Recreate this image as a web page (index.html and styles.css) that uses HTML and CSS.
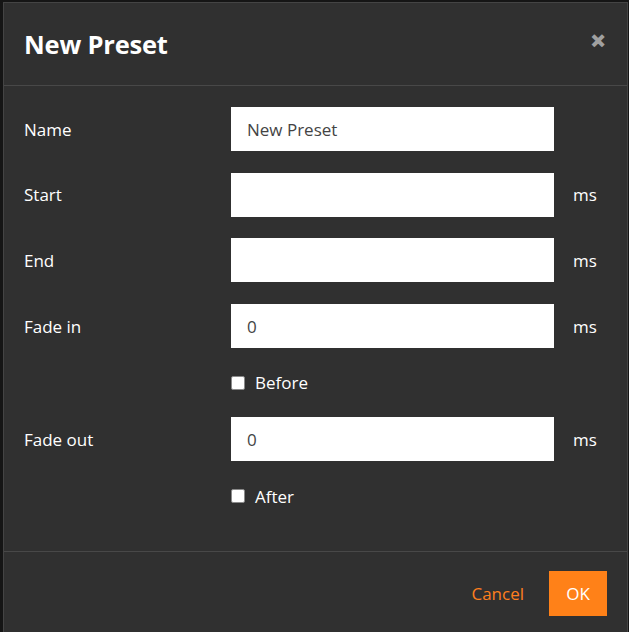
FILE: index.html
```html
<!DOCTYPE html>
<html>
<head>
<meta charset="utf-8">
<link rel="stylesheet" href="styles.css">
</head>
<body>
<div class="modal">
  <div class="modal-header">
    <h1 class="title">New Preset</h1>
    <span class="close">&#x2715;</span>
  </div>
  <div class="modal-body">
    <div class="form">
      <label class="label">Name</label>
      <div class="input">New Preset</div>
      <span class="unit"></span>

      <label class="label">Start</label>
      <div class="input"></div>
      <span class="unit">ms</span>

      <label class="label">End</label>
      <div class="input"></div>
      <span class="unit">ms</span>

      <label class="label">Fade in</label>
      <div class="input">0</div>
      <span class="unit">ms</span>

      <span></span>
      <div class="check"><span class="box"></span><span>Before</span></div>
      <span></span>

      <label class="label">Fade out</label>
      <div class="input">0</div>
      <span class="unit">ms</span>

      <span></span>
      <div class="check"><span class="box"></span><span>After</span></div>
      <span></span>
    </div>
  </div>
  <div class="modal-footer">
    <span class="cancel">Cancel</span>
    <span class="ok">OK</span>
  </div>
</div>
</body>
</html>
```
FILE: styles.css
```css
html, body {
  margin: 0;
  padding: 0;
  background: #151515;
  height: 100%;
  overflow: hidden;
}
body {
  font-family: "Open Sans", "Noto Sans", sans-serif;
  color: #ffffff;
  padding: 2px 1px 0 3px;
  box-sizing: border-box;
}
.modal {
  background: #303030;
  border: 1px solid #444444;
  border-bottom: none;
  height: 640px;
  box-sizing: border-box;
}
.modal-header {
  height: 83px;
  border-bottom: 1px solid #484848;
  display: flex;
  align-items: center;
  justify-content: space-between;
  padding: 0 22px 0 20px;
  box-sizing: border-box;
}
.title {
  margin: 0;
  font-size: 25.5px;
  font-weight: 700;
  letter-spacing: -0.2px;
}
.close {
  color: #a0a0a0;
  font-size: 17px;
  font-weight: 900;
  margin-top: -8px;
  -webkit-text-stroke: 1.5px #a0a0a0;
}
.modal-body {
  padding: 21px 20px 42px 20px;
  border-bottom: 1px solid #484848;
}
.form {
  display: grid;
  grid-template-columns: 207px 323px 1fr;
  row-gap: 21.7px;
  align-items: center;
}
.label {
  font-size: 17px;
}
.input {
  background: #ffffff;
  height: 44px;
  box-sizing: border-box;
  padding: 0 16px;
  display: flex;
  align-items: center;
  color: #444444;
  font-size: 17px;
}
.unit {
  padding-left: 19px;
  font-size: 17px;
}
.check {
  display: flex;
  align-items: center;
  height: 26px;
  font-size: 17px;
  gap: 10px;
}
.box {
  width: 12px;
  height: 12px;
  background: #ffffff;
  border: 1px solid #8a8a8a;
  border-radius: 2px;
}
.modal-footer {
  display: flex;
  justify-content: flex-end;
  align-items: center;
  padding: 19px 20px 0 0;
  gap: 25px;
}
.cancel {
  color: #ff7f1e;
  font-size: 17px;
}
.ok {
  background: #ff8118;
  color: #ffffff;
  font-size: 17px;
  width: 58px;
  height: 45px;
  display: flex;
  align-items: center;
  justify-content: center;
}
```
